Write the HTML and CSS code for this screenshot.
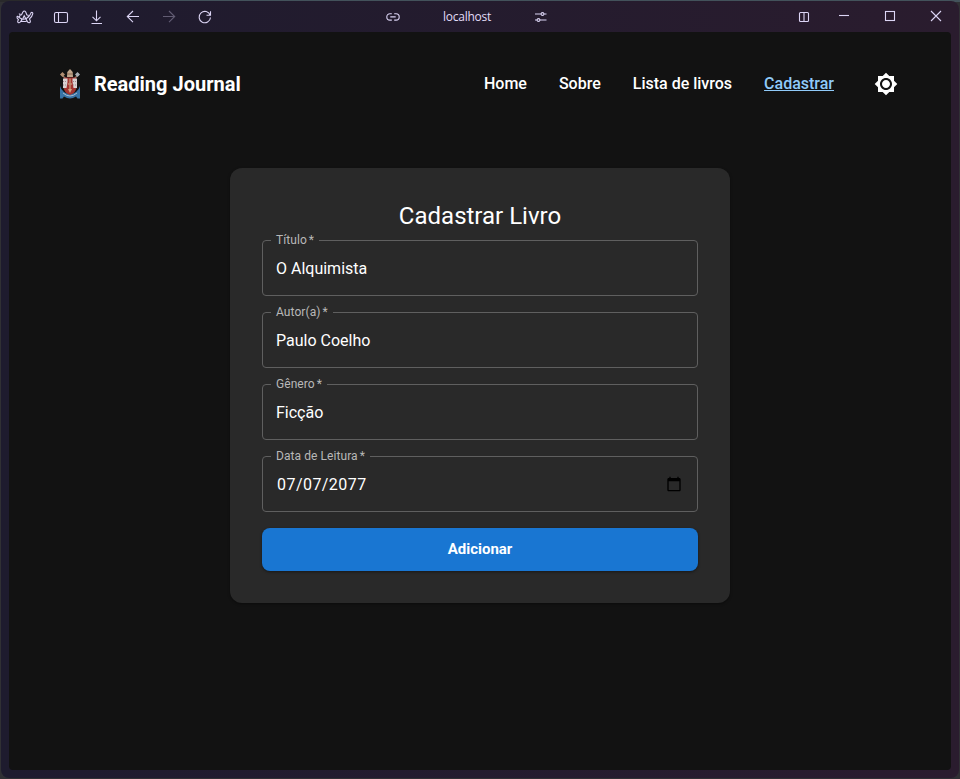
FILE: index.html
```html
<!DOCTYPE html>
<html lang="pt-BR">
<head>
<meta charset="utf-8">
<title>Reading Journal</title>
<link rel="stylesheet" href="styles.css">
</head>
<body>
<div class="window">
  <header class="chrome">
    <div class="tools">
      <span class="tool"><svg width="18" height="16" viewBox="0 0 18 16"><path d="M5.3 6.200 6.900 3Q8.300 .9 9.700 3L11 6.200M7 9.200 8.200 6.800 9.700 9.600M3 8.600Q1.300 6.300 1 8 .8 9.200 2.400 10.700L1.700 12.200Q1.600 13.700 3.200 13.700 4.300 13.600 5 12.100 8 13 11 11.900 11.700 13.900 13.200 13.700 14.800 13.400 14.200 11.600L13.500 9.900Q16.300 7.500 16.800 4.700 16.900 3.400 15.800 3.400 14.900 3.400 14.600 4.700 14 6.600 12.600 7.800L11.700 5.800M3 8.600 4.300 6Q4 4.600 2.900 5.200M5 12.100 6 9.900Q8 10.400 10 9.700L11 11.900M3 8.600 6 9.900M10 9.700 12.600 7.800"/></svg></span>
      <span class="tool"><svg width="16" height="16" viewBox="0 0 16 16"><rect x="1.500" y="3.500" width="13" height="10" rx="1.500"/><path d="M5.500 3.500v10"/></svg></span>
      <span class="tool"><svg width="16" height="16" viewBox="0 0 16 16"><path d="M7.500 1.500v10M3.500 7.800l4 4 4-4M2.500 14.500h10.500"/></svg></span>
      <span class="tool"><svg width="16" height="16" viewBox="0 0 16 16"><path d="M14 7.500H2.500M8 2 2.300 7.500 8 13.200"/></svg></span>
      <span class="tool dim"><svg width="16" height="16" viewBox="0 0 16 16"><path d="M2 7.500h11.500M8 2l5.700 5.500L8 13.200"/></svg></span>
      <span class="tool"><svg width="16" height="16" viewBox="0 0 16 16"><path d="M13.200 6.200A5.700 5.700 0 1 0 13.500 8.500M13.500 2.300v4H9.500"/></svg></span>
    </div>
    <div class="address">
      <svg width="14" height="14" viewBox="0 0 14 14"><path d="M5.800 3.700H4a3.200 3.200 0 0 0 0 6.400h1.800M8.200 3.700H10a3.200 3.200 0 0 1 0 6.400H8.200M4.300 6.900h5.400"/></svg>
      <span class="host">localhost</span>
      <svg width="14" height="14" viewBox="0 0 14 14"><path d="M1 4h6M10 4h2.500M1 10h2M6 10h6.500"/><circle cx="8.500" cy="4" r="1.400"/><circle cx="4.500" cy="10" r="1.400"/></svg>
    </div>
    <div class="controls">
      <svg width="12" height="12" viewBox="0 0 12 12"><rect x="1.500" y="1.500" width="9" height="9" rx="1"/><path d="M6 1.500v9"/></svg>
      <svg width="12" height="12" viewBox="0 0 12 12"><path d="M1 5.500h10"/></svg>
      <svg width="12" height="12" viewBox="0 0 12 12"><rect x="1.500" y="1.500" width="9" height="9"/></svg>
      <svg width="12" height="12" viewBox="0 0 12 12"><path d="m1 1 10 10M11 1 1 11"/></svg>
    </div>
  </header>
  <div class="page">
    <nav class="navbar">
      <div class="brand">
        <svg class="crest" width="22" height="30" viewBox="0 0 22 30">
          <path d="M2 5 17 20M20 5 5 20" stroke="#9a7a66" stroke-width="1.400"/>
          <path d="M1 5.500 3.500 3 6 5.500 3.500 8Z" fill="#b08d70"/><path d="M16 5.500 18.500 3 21 5.500 18.500 8Z" fill="#a7adb3"/>
          <path d="M8 8 8.300 3 11 0 13.700 3 14 8Z" fill="#c0a68c"/><path d="M8 5h6" stroke="#8c6c55"/>
          <path d="M1 17Q3 24 11 25 19 24 21 17V29.500H18.500L17 27.500Q11 31.500 5 27.500L3.500 29.500H1Z" fill="#3873a6"/>
          <path d="M5 8.500H17V20Q16 24.500 11 26 6 24.500 5 20Z" fill="#a33430"/>
          <path d="M4 9.500H8.500V13L7.500 19H4ZM13.500 9.500H18V19H14.500L13.500 13Z" fill="#d8d2d2"/>
          <path d="M4 12.500h4M4 16h4M14 12.500h4M14 16h4" stroke="#8d6a70" stroke-width=".7" stroke-dasharray="1 1"/>
          <path d="M11 9.500v12M9 15h4" stroke="#c08a70" stroke-width="1.500"/>
          <path d="M9 20h4L11 24Z" fill="#d0a283"/><path d="M4 24Q11 30 18 24" stroke="#b3c3d0" stroke-width=".9" fill="none"/>
        </svg>
        <span class="name">Reading Journal</span>
      </div>
      <div class="links">
        <a>Home</a><a>Sobre</a><a>Lista de livros</a><a class="active">Cadastrar</a>
        <svg class="sun" width="24" height="24" viewBox="0 0 24 24"><path d="M20 8.690V4h-4.690L12 .69 8.690 4H4v4.690L.69 12 4 15.310V20h4.690L12 23.310 15.310 20H20v-4.690L23.310 12 20 8.690zM12 18c-3.310 0-6-2.690-6-6s2.690-6 6-6 6 2.690 6 6-2.690 6-6 6zm0-10c-2.210 0-4 1.790-4 4s1.790 4 4 4 4-1.790 4-4-1.790-4-4-4z"/></svg>
      </div>
    </nav>
    <form class="card">
      <h1>Cadastrar Livro</h1>
      <fieldset class="field"><legend>Título<span class="req">*</span></legend><span class="value">O Alquimista</span></fieldset>
      <fieldset class="field"><legend>Autor(a)<span class="req">*</span></legend><span class="value">Paulo Coelho</span></fieldset>
      <fieldset class="field"><legend>Gênero<span class="req">*</span></legend><span class="value">Ficção</span></fieldset>
      <fieldset class="field"><legend>Data de Leitura<span class="req">*</span></legend><span class="value date">07/07/2077<svg width="16" height="16" viewBox="0 0 24 24"><path d="M20 3h-1V1h-2v2H7V1H5v2H4c-1.100 0-2 .9-2 2v16c0 1.100.9 2 2 2h16c1.100 0 2-.9 2-2V5c0-1.100-.9-2-2-2zm0 18H4V8h16v13z"/></svg></span></fieldset>
      <button type="button">Adicionar</button>
    </form>
  </div>
</div>
</body>
</html>
```
FILE: styles.css
```css
* { box-sizing: border-box; }
body {
  margin: 0;
  height: 779px;
  padding: 1px;
  overflow: hidden;
  background: linear-gradient(90deg, #29292b 0 90px, #43525b 90px 100%) top / 100% 2px no-repeat, #303034;
  font-family: Roboto, sans-serif;
  color: #fff;
}
.window {
  height: 777px;
  padding: 0 8px 8px;
  border-radius: 8px;
  background: linear-gradient(90deg, #1e1b2e, #2a1c2e);
}
.chrome {
  height: 31px;
  display: grid;
  grid-template-columns: 378px 162px 1fr;
  align-items: center;
}
.chrome svg { fill: none; stroke: #dcd5f5; stroke-width: 1.1; flex: none; }
.tools { display: flex; margin-left: -2px; }
.tool { width: 36px; display: flex; justify-content: center; }
.dim { opacity: .35; }
.address { display: flex; align-items: center; justify-content: space-between; margin-left: -1px; margin-right: 1px; }
.host { font: 12px "Open Sans", sans-serif; letter-spacing: -.26px; color: #e2dcf8; }
.controls { display: flex; justify-content: flex-end; gap: 34px; padding-right: 9px; }
.controls svg:first-child { margin-right: -6px; margin-top: 1px; }
.page {
  height: 738px;
  background: #121212;
  border-radius: 4px;
}
.navbar {
  height: 104px;
  padding: 0 53px 0 50px;
  display: flex;
  align-items: center;
  justify-content: space-between;
}
.brand { display: flex; align-items: center; gap: 13px; }
.name { font-size: 20px; font-weight: 700; }
.links { display: flex; align-items: center; gap: 32px; font-size: 16px; font-weight: 500; }
.links a { padding-bottom: 2px; }
.active { color: #90caf9; text-decoration: underline; }
.sun { fill: #fff; margin-left: 8px; }
.card {
  width: 500px;
  height: 435px;
  margin: 32px auto 0;
  padding: 32px;
  border-radius: 12px;
  background: #292929;
  box-shadow: 0 1px 3px rgba(0, 0, 0, .4);
}
h1 {
  margin: 0 0 1px;
  font-size: 24px;
  line-height: 32px;
  font-weight: 400;
  text-align: center;
}
.field {
  height: 63px;
  margin: 0 0 9px;
  padding: 0 13px 0 8px;
  border: 1px solid #5f5f5f;
  border-radius: 4px;
  min-width: 0;
}
.field legend {
  height: 14px;
  padding: 0 5px;
  font-size: 12px;
  line-height: 14px;
  letter-spacing: .07px;
  color: #b8b8b8;
}
.req { margin-left: 2px; }
.value {
  display: flex;
  align-items: center;
  justify-content: space-between;
  height: 42px;
  padding-left: 5px;
  font-size: 16px;
}
.date { padding-left: 6px; padding-right: 2px; letter-spacing: .45px; }
button {
  display: block;
  width: 100%;
  height: 43px;
  margin: 16px 0 0;
  padding: 0 0 2px;
  border: 0;
  border-radius: 8px;
  background: #1976d2;
  color: #fff;
  font: 700 15px Roboto, sans-serif;
  box-shadow: 0 1px 3px rgba(0, 0, 0, .45);
}
```
